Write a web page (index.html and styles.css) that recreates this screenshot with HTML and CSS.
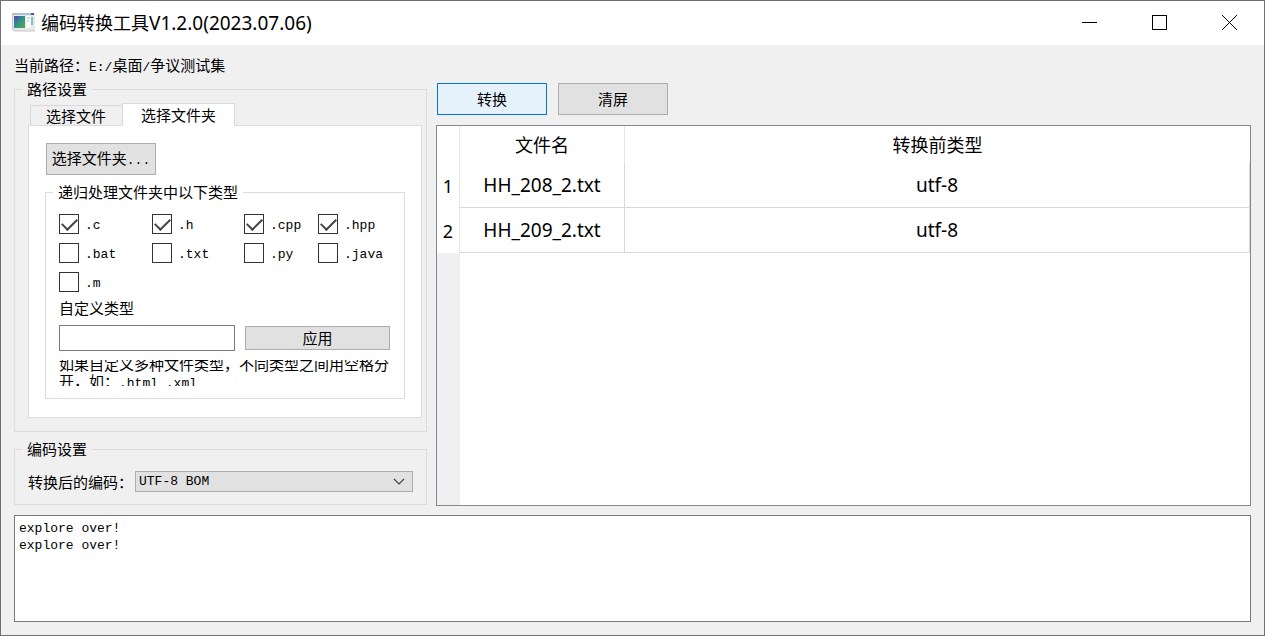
FILE: index.html
```
<!DOCTYPE html>
<html lang="zh-CN">
<head>
<meta charset="utf-8">
<title>编码转换工具</title>
<link rel="stylesheet" href="styles.css">
</head>
<body>
<div class="window">
  <header class="titlebar">
    <svg class="app-icon" width="23" height="19" viewBox="0 0 23 19" aria-hidden="true">
      <defs>
        <linearGradient id="pane" x1="0" y1="0" x2="1" y2="1">
          <stop offset="0" stop-color="#3f56a8"/><stop offset=".5" stop-color="#38918a"/><stop offset="1" stop-color="#4fae4a"/>
        </linearGradient>
      </defs>
      <rect x="1" y="0" width="22" height="18" fill="#e6e9ec"/>
      <rect x="1" y="0" width="21" height="2" fill="#a9c3cf"/>
      <rect x="19" y="0" width="3" height="2" fill="#4a55a0"/>
      <path d="M0.500 0V16L2 18H23" fill="none" stroke="#c3c7ca"/>
      <rect x="2" y="3" width="11" height="12" fill="url(#pane)"/>
      <rect x="3" y="3" width="3" height="3" fill="#5d4cb0"/>
      <rect x="14" y="3" width="5" height="12" fill="#fafafa"/>
      <path d="M15 5h3M15 8h2" stroke="#a8c8b8"/>
      <rect x="19" y="4" width="2" height="8" fill="#7fc6b4"/>
    </svg>
    <h1 class="title">编码转换工具<span class="ui-latin">V1.2.0(2023.07.06)</span></h1>
    <button class="win-btn" type="button" aria-label="最小化"><svg width="15" height="15" viewBox="0 0 15 15"><path d="M0 7.500H15" stroke="#000"/></svg></button>
    <button class="win-btn" type="button" aria-label="最大化"><svg width="15" height="15" viewBox="0 0 15 15"><rect x=".5" y=".5" width="14" height="14" fill="none" stroke="#000"/></svg></button>
    <button class="win-btn" type="button" aria-label="关闭"><svg width="15" height="15" viewBox="0 0 15 15"><path d="M0 0L15 15M15 0L0 15" stroke="#000"/></svg></button>
  </header>

  <p class="path">当前路径：<span class="mono">E:/</span>桌面<span class="mono">/</span>争议测试集</p>

  <main class="main">
    <div class="settings">
      <fieldset class="group">
        <legend>路径设置</legend>
        <div class="path-body">
          <div class="tabs" role="tablist">
            <button class="tab" type="button" role="tab" aria-selected="false">选择文件</button>
            <button class="tab tab-active" type="button" role="tab" aria-selected="true">选择文件夹</button>
          </div>
          <div class="panel" role="tabpanel">
            <button class="btn btn-large btn-folder" type="button">选择文件夹<span class="mono">...</span></button>
            <fieldset class="group types">
              <legend>递归处理文件夹中以下类型</legend>
              <div class="types-body">
                <div class="checks">
                  <label class="check"><input type="checkbox" checked><span class="mono">.c</span></label>
                  <label class="check"><input type="checkbox" checked><span class="mono">.h</span></label>
                  <label class="check"><input type="checkbox" checked><span class="mono">.cpp</span></label>
                  <label class="check"><input type="checkbox" checked><span class="mono">.hpp</span></label>
                  <label class="check"><input type="checkbox"><span class="mono">.bat</span></label>
                  <label class="check"><input type="checkbox"><span class="mono">.txt</span></label>
                  <label class="check"><input type="checkbox"><span class="mono">.py</span></label>
                  <label class="check"><input type="checkbox"><span class="mono">.java</span></label>
                  <label class="check"><input type="checkbox"><span class="mono">.m</span></label>
                </div>
                <label class="custom-label" for="custom">自定义类型</label>
                <div class="custom-row">
                  <input class="field" id="custom" type="text">
                  <button class="btn btn-apply" type="button">应用</button>
                </div>
                <div class="hint"><p>如果自定义多种文件类型，不同类型之间用空格分开，如：<span class="mono">.html .xml</span></p></div>
              </div>
            </fieldset>
          </div>
        </div>
      </fieldset>

      <fieldset class="group">
        <legend>编码设置</legend>
        <div class="encoding-row">
          <label for="encoding">转换后的编码：</label>
          <div class="select-wrap">
            <select class="select mono" id="encoding"><option>UTF-8 BOM</option></select>
            <svg class="chevron" width="12" height="7" viewBox="0 0 12 7" aria-hidden="true"><path d="M1 1L6 6L11 1" fill="none" stroke="#444" stroke-width="1.200"/></svg>
          </div>
        </div>
      </fieldset>
    </div>

    <div class="results">
      <div class="actions">
        <button class="btn btn-large btn-default" type="button">转换</button>
        <button class="btn btn-large" type="button">清屏</button>
      </div>
      <div class="table-wrap">
        <table class="files">
          <colgroup><col class="col-index"><col class="col-name"><col></colgroup>
          <thead>
            <tr><th></th><th scope="col">文件名</th><th scope="col">转换前类型</th></tr>
          </thead>
          <tbody>
            <tr><th scope="row">1</th><td>HH_208_2.txt</td><td>utf-8</td></tr>
            <tr><th scope="row">2</th><td>HH_209_2.txt</td><td>utf-8</td></tr>
          </tbody>
        </table>
      </div>
    </div>
  </main>

  <textarea class="log mono" readonly aria-label="日志">explore over!
explore over!</textarea>
</div>
</body>
</html>
```
FILE: styles.css
```
* {
  box-sizing: border-box;
}

body {
  margin: 0;
  color: #000;
  font: 15px/18px "Noto Sans CJK SC", sans-serif;
}

button,
input,
select {
  margin: 0;
  color: inherit;
  font: inherit;
}

.mono {
  font-family: "Liberation Mono", monospace;
  font-size: 13px;
}

.window {
  display: flex;
  flex-direction: column;
  min-height: 100vh;
  padding-bottom: 13px;
  border: 1px solid #707070;
  background: #f0f0f0;
}

.titlebar {
  display: flex;
  align-items: center;
  height: 44px;
  padding: 0 0 1px 11px;
  background: #fff;
}

.title {
  flex: 1;
  margin: 0 0 0 6px;
  font-size: 18px;
  font-weight: 400;
  line-height: 24px;
}

.ui-latin {
  font-family: "Noto Sans", sans-serif;
  font-size: 19px;
}

.win-btn {
  display: flex;
  align-items: center;
  justify-content: center;
  width: 70px;
  height: 43px;
  padding: 0;
  border: 0;
  background: none;
}

.path {
  height: 18px;
  margin: 11px 13px 7px;
}

.main {
  display: flex;
  flex: 1;
  gap: 9px;
  padding: 0 13px;
}

.settings {
  display: flex;
  flex: none;
  flex-direction: column;
  gap: 9px;
  width: 413px;
}

.group {
  min-width: 0;
  margin: 0;
  padding: 0;
  border: 1px solid #dcdcdc;
}

.group legend {
  margin-left: 7px;
  padding: 0 5px;
  line-height: 16px;
}

.path-body {
  padding: 6px 4px 13px 13px;
}

.tabs {
  display: flex;
  align-items: flex-end;
  padding-left: 2px;
}

.tab {
  height: 20px;
  padding: 0 16px 0 15px;
  border: 1px solid #d9d9d9;
  border-width: 1px 0 0 1px;
  background: #f0f0f0;
  line-height: 18px;
}

.tab-active {
  z-index: 1;
  height: 23px;
  margin-bottom: -1px;
  padding: 0 18px;
  border-right-width: 1px;
  background: #fff;
}

.panel {
  padding: 17px 16px 18px;
  border: 1px solid #dcdcdc;
  background: #fff;
}

.btn {
  padding: 0 4px;
  border: 1px solid #adadad;
  background: #e1e1e1;
  text-align: center;
  white-space: nowrap;
}

.btn-large {
  width: 110px;
  height: 32px;
}

.btn-folder {
  margin-left: 1px;
}

.btn-default {
  border-color: #0078d7;
  background: #e5f1fb;
}

.types {
  margin-top: 9px;
}

.types-body {
  padding: 14px 14px 12px 13px;
}

.checks {
  display: grid;
  grid-template-columns: 93px 92px 74px 1fr;
  row-gap: 9px;
}

.check {
  display: flex;
  align-items: flex-end;
  gap: 6px;
  height: 20px;
  line-height: 16px;
}

.check input {
  display: grid;
  place-items: center;
  width: 20px;
  height: 20px;
  border: 1px solid #333;
  background: #fff;
  appearance: none;
}

.check input:checked::before {
  width: 13px;
  height: 7px;
  margin-bottom: 4px;
  border: solid #444;
  border-width: 0 0 2px 2px;
  content: "";
  transform: rotate(-45deg);
}

.custom-label {
  display: block;
  margin: 7px 0 8px;
}

.custom-row {
  display: flex;
  align-items: center;
  gap: 10px;
}

.field {
  flex: 1;
  min-width: 0;
  height: 26px;
  padding: 0 4px;
  border: 1px solid #7a7a7a;
  background: #fff;
}

.btn-apply {
  width: 145px;
  height: 24px;
}

.hint {
  display: flex;
  align-items: center;
  height: 26px;
  margin-top: 9px;
  overflow: hidden;
}

.hint p {
  margin: 0;
  line-height: 17px;
}

.encoding-row {
  display: flex;
  align-items: center;
  gap: 2px;
  padding: 14px 13px 12px;
}

.select-wrap {
  display: grid;
  flex: 1;
  align-items: center;
}

.select,
.chevron {
  grid-area: 1 / 1;
}

.select {
  width: 100%;
  height: 21px;
  padding: 0 3px;
  border: 1px solid #adadad;
  border-radius: 0;
  background: #e1e1e1;
  font-family: "Liberation Mono", monospace;
  font-size: 13px;
  appearance: none;
}

.chevron {
  justify-self: end;
  margin-right: 8px;
  pointer-events: none;
}

.results {
  display: flex;
  flex: 1;
  flex-direction: column;
  min-width: 0;
  padding-top: 2px;
}

.actions {
  display: flex;
  gap: 11px;
  margin: 0 0 10px 1px;
}

.table-wrap {
  flex: 1;
  border: 1px solid #828790;
  background: linear-gradient(to right, #f0f0f0 23px, #fff 23px);
}

.files {
  width: 100%;
  border-spacing: 0;
  background: #fff;
  font-family: "Noto Sans", "Noto Sans CJK SC", sans-serif;
  font-size: 18px;
  line-height: 24px;
  table-layout: fixed;
  text-align: center;
}

.col-index {
  width: 23px;
}

.col-name {
  width: 165px;
}

.files th,
.files td {
  height: 45px;
  padding: 0;
  border-right: 1px solid #d8d8d8;
  font-weight: 400;
}

.files td {
  border-bottom: 1px solid #d8d8d8;
  font-size: 19px;
}

.files th {
  border-color: #e5e5e5;
}

.files thead th {
  height: 37px;
}

.files thead th:last-child {
  border-right: 0;
}

.log {
  display: block;
  height: 107px;
  margin: 9px 13px 0;
  padding: 4px;
  border: 1px solid #7a7a7a;
  background: #fff;
  color: #000;
  line-height: 17px;
  resize: none;
}
```
